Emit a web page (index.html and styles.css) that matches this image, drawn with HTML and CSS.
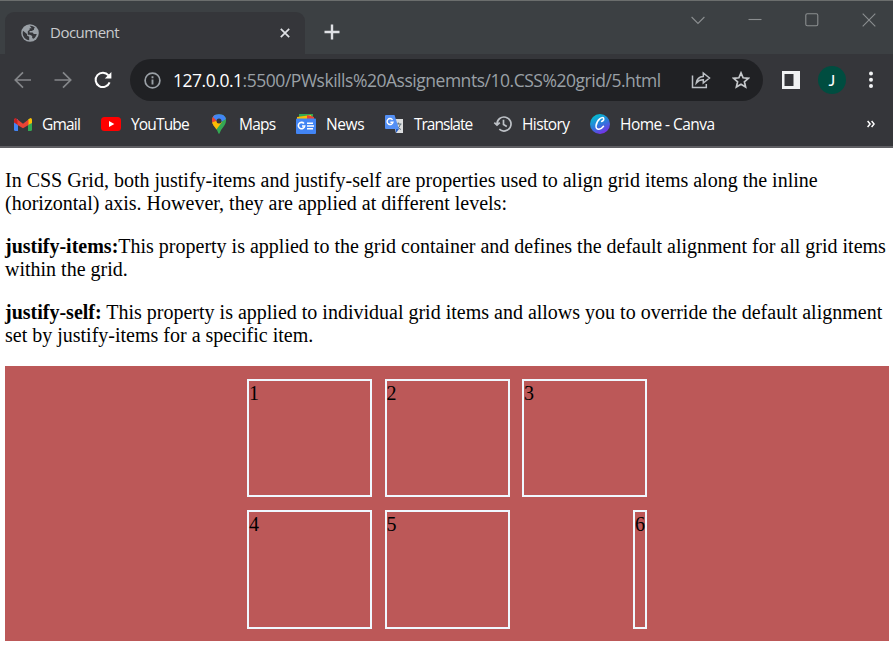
FILE: index.html
```
<!DOCTYPE html>
<html lang="en">
<head>
<meta charset="utf-8">
<title>Document</title>
<link rel="stylesheet" href="styles.css">
</head>
<body>
<header class="browser">
  <div class="tabs">
    <div class="tab">
      <svg class="globe" viewBox="0 0 18 18"><circle cx="9" cy="9" r="8.8" fill="#9aa0a6"/><path d="M2 6.7L6 10v1.5l2.2 1.2v3.5C4.500 15.900 1.700 12.800 1.700 9zM8.700 1.800c2.100-.2 4 .5 5.300 2l-1 .8v1.200l-2.300 1.300H8.600v1.300l3 .1 1.200 1.500h2.900c-.4 2-1.600 3.800-3.300 4.800l-1.200-.8v-2L8.900 10.700H6.800V7.300l1.800-1.500V4.300h2.100z" fill="#35363a"/></svg>
      <span class="tab-title">Document</span>
      <svg class="close" viewBox="0 0 10 10"><path d="M.8.8l8.400 8.400M9.200.8L.8 9.200" stroke="#dfe1e5" stroke-width="1.700"/></svg>
    </div>
    <svg class="plus" viewBox="0 0 16 16"><path d="M8 .5v15M.5 8h15" stroke="#dfe1e5" stroke-width="2.400"/></svg>
    <div class="window-buttons">
      <svg viewBox="0 0 14 14"><path d="M.6 4l6.400 6.500L13.400 4" /></svg>
      <svg viewBox="0 0 14 14"><path d="M.5 6.500h13"/></svg>
      <svg viewBox="0 0 14 14"><rect x=".8" y=".8" width="12" height="12" rx="1.500"/></svg>
      <svg viewBox="0 0 14 14"><path d="M.7.700l12.600 12.600M13.300.7L.7 13.300"/></svg>
    </div>
  </div>
  <div class="toolbar">
    <svg class="nav" viewBox="0 0 18 18"><path d="M17 9H1.500M9 1.300L1.300 9 9 16.700" fill="none" stroke="#85878a" stroke-width="1.700"/></svg>
    <svg class="nav forward" viewBox="0 0 18 18"><path d="M.5 9h16M9 1.300L16.700 9 9 16.700" fill="none" stroke="#85878a" stroke-width="1.700"/></svg>
    <svg class="nav reload" viewBox="0 0 18 18"><path d="M15.600 11.300A7.200 7.200 0 1 1 14.500 4.400" fill="none" stroke="#fff" stroke-width="2"/><path d="M17.400 1v6.600h-6.600z" fill="#fff"/></svg>
    <div class="address">
      <svg class="info" viewBox="0 0 17 17"><circle cx="8.500" cy="8.500" r="7.400" fill="none" stroke="#9aa0a6" stroke-width="1.700"/><path d="M8.500 7.500v5M8.500 4.300v1.900" stroke="#9aa0a6" stroke-width="1.900"/></svg>
      <span class="url"><span class="host">127.0.0.1</span>:5500/PWskills%20Assignemnts/10.CSS%20grid/5.html</span>
      <svg class="share" viewBox="0 0 20 18"><path d="M1.500 4.500V16.500H15.300V13M5.300 12c.5-4.300 3-6.400 7-6.600V2l6.200 5-6.200 5V8.800C9 8.700 7.100 9.700 5.300 12z" fill="none" stroke="#bdc1c6" stroke-width="1.500"/></svg>
      <svg class="star" viewBox="0 0 18 18"><path d="M9 1.900l2.100 4.900 5.300.5-4 3.500 1.200 5.200L9 13.200 4.400 16l1.200-5.200-4-3.500 5.300-.5z" fill="none" stroke="#c6c9cc" stroke-width="1.700"/></svg>
    </div>
    <svg class="panel" viewBox="0 0 18 18"><path d="M0 0h18v18H0zM2.500 3v12h9V3z" fill="#f1f3f4" fill-rule="evenodd"/></svg>
    <span class="avatar">J</span>
    <svg class="menu" viewBox="0 0 4 18"><circle cx="2" cy="2.500" r="2"/><circle cx="2" cy="8.700" r="2"/><circle cx="2" cy="14.900" r="2"/></svg>
  </div>
  <nav class="bookmarks">
    <a><svg viewBox="0 0 20 20"><path d="M1 5h4v12H2.500Q1 17 1 15.500z" fill="#4285f4"/><path d="M15 5h4v10.500Q19 17 17.500 17H15z" fill="#34a853"/><path d="M15 6q3.500-4 4 0v3l-4 2z" fill="#fbbc04"/><path d="M1 6q.5-4 4 0v5L1 8.500z" fill="#c5221f"/><path d="M4.500 5.500L10 9.700l5.500-4.200V11L10 14.200 4.500 11z" fill="#ea4335"/></svg><span class="gmail">Gmail</span></a>
    <a><svg viewBox="0 0 20 20"><rect y="3" width="20" height="14" rx="3.500" fill="#f00"/><path d="M8 7l5.300 3L8 13z" fill="#fff"/></svg><span class="youtube">YouTube</span></a>
    <a><svg viewBox="0 0 20 20"><g clip-path="url(#pin)"><path d="M0 0h20v20H0z" fill="#34a853"/><path d="M0 0h7l3 7-5 6H0z" fill="#ea4335"/><path d="M5 0h14v4l-9 5-6-6z" fill="#4285f4"/><path d="M2 9l5-2 6 1-6 8z" fill="#fbbc04"/></g><circle cx="10" cy="7" r="2.500" fill="#35363a"/><defs><clipPath id="pin"><path d="M10 .2c9 0 8 9 4.500 12.500Q11.500 16 10.500 19.500q-.5.700-1 0Q8.500 16 5.500 12.700C2 9 1 .2 10 .2z"/></clipPath></defs></svg><span>Maps</span></a>
    <a><svg viewBox="0 0 20 20"><path d="M3 0h14v6H3z" fill="#34a853"/><path d="M1 3l14-2 1 6H1z" fill="#fbbc04"/><path d="M11 1l7 2v4h-7z" fill="#ea4335"/><rect y="4.500" width="20" height="15.500" rx="1" fill="#4285f4"/><path d="M8 9.500A3.200 3.200 0 1 0 8.700 12H6M11 9.300h6M11 12h7M11 14.700h6" fill="none" stroke="#fff" stroke-width="1.600"/></svg><span class="news">News</span></a>
    <a><svg viewBox="0 0 20 20"><path d="M8 5h11v14H12z" fill="#dcdedf"/><path d="M11 10h6.500M14.300 8.500V10M16.500 10q-1 4-4 5M12.500 11.500q1.500 3 4.500 4" fill="none" stroke="#60717a" stroke-width="1"/><path d="M1.500 1h9l4.500 14H2Q1 15 1 14V1.500z" fill="#5490f5"/><path d="M11.500 15H15l-3 4z" fill="#2860c8"/><path d="M8.500 5.800A3 3 0 1 0 9 8.200H6.400" fill="none" stroke="#fff" stroke-width="1.400"/></svg><span class="translate">Translate</span></a>
    <a><svg viewBox="0 0 20 20"><path d="M4 10a7 7 0 1 1 2.300 5.200M1.300 8.700L4 11.200l2.800-2.500M10.500 5.800V10.500l3.300 2" fill="none" stroke="#bdc1c6" stroke-width="1.700"/></svg><span class="history">History</span></a>
    <a><svg viewBox="0 0 20 20"><defs><linearGradient id="canva" x1=".2" y1="0" x2=".7" y2="1"><stop stop-color="#00c4cc"/><stop offset=".5" stop-color="#277fda"/><stop offset="1" stop-color="#7d2ae8"/></linearGradient></defs><circle cx="10" cy="10" r="10" fill="url(#canva)"/><path d="M11.600 7.500q2.800-1.200 2-3.300-.8-1.400-3.600.5Q6.500 7.500 6 12q0 3.500 3 3.300 2.500-.3 4.500-3" fill="none" stroke="#fff" stroke-width="1.500" stroke-linecap="round"/></svg><span class="canva">Home - Canva</span></a>
    <svg class="more" viewBox="0 0 8 8"><path d="M.6 1l2.500 3L.6 7M4.600 1l2.500 3-2.500 3" fill="none" stroke="#fff" stroke-width="1.500"/></svg>
  </nav>
</header>
<main>
  <p>In CSS Grid, both justify-items and justify-self are properties used to align grid items along the inline (horizontal) axis. However, they are applied at different levels:</p>
  <p><b>justify-items:</b>This property is applied to the grid container and defines the default alignment for all grid items within the grid.</p>
  <p><b>justify-self:</b> This property is applied to individual grid items and allows you to override the default alignment set by justify-items for a specific item.</p>
  <div class="grid">
    <div class="item">1</div>
    <div class="item">2</div>
    <div class="item">3</div>
    <div class="item">4</div>
    <div class="item">5</div>
    <div class="item item-end">6</div>
  </div>
</main>
</body>
</html>
```
FILE: styles.css
```
* { box-sizing: border-box; }
body { margin: 0; background: #fff; color: #000; font: 20px/23px "Liberation Serif", serif; overflow: hidden; }
svg { display: block; flex: none; }
.browser { height: 148px; background: #35363a; border-bottom: 2px solid #5f5f63; font-family: "Open Sans", sans-serif; color: #fff; }
.tabs { height: 54px; background: #3c4043; border-top: 1px solid #6b6e6d; display: flex; padding: 11px 0 0 5px; }
.tab { width: 300px; height: 42px; background: #35363a; border-radius: 9px 9px 0 0; display: flex; align-items: center; padding: 0 15px 0 16px; }
.globe { width: 18px; height: 18px; }
.tab-title { margin-left: 11px; padding-bottom: 2px; flex: 1; font-size: 15px; letter-spacing: -.5px; color: #c9cbcd; }
.close { width: 10px; height: 10px; }
.plus { width: 16px; height: 16px; margin: 12px 0 0 19px; }
.window-buttons { margin: 1px 17px 0 auto; display: flex; gap: 43px; height: 14px; }
.window-buttons svg { width: 14px; height: 14px; fill: none; stroke: #8b8e90; stroke-width: 1.1; }
.toolbar { display: flex; align-items: center; height: 52px; padding: 0 20px 0 14px; }
.nav { width: 18px; height: 18px; }
.forward { margin-left: 22px; }
.reload { margin-left: 22px; }
.address { display: flex; align-items: center; width: 633px; height: 42px; margin: 0 19px 0 18px; border-radius: 21px; background: #202124; padding: 0 13px 0 14px; }
.info { width: 17px; height: 17px; }
.url { width: 505px; margin-left: 12px; white-space: nowrap; font-size: 17.5px; letter-spacing: -.47px; color: #9aa0a6; }
.host { color: #fff; }
.share { width: 20px; height: 18px; margin-left: 13px; }
.star { width: 18px; height: 18px; margin-left: auto; }
.panel { width: 18px; height: 18px; }
.avatar { width: 28px; height: 28px; margin-left: 18px; border-radius: 50%; background: #004d40; font: 16px/28px Lato, sans-serif; text-align: center; }
.menu { width: 4px; height: 18px; margin-left: auto; fill: #f1f3f4; }
.bookmarks { display: grid; grid-template-columns: 88px 108px 87px 88px 109px 97px 1fr 8px; align-items: center; height: 36px; padding: 0 18px 0 13px; }
.bookmarks a { display: flex; align-items: center; gap: 10px; font-size: 15.5px; white-space: nowrap; }
.bookmarks a svg { width: 20px; height: 20px; }
.bookmarks span { letter-spacing: -.75px; }
.bookmarks .gmail { letter-spacing: -.8px; margin-left: -1px; }
.bookmarks .youtube { letter-spacing: -.85px; }
.bookmarks .news { letter-spacing: -.4px; }
.bookmarks .translate { letter-spacing: -1px; }
.bookmarks .history { letter-spacing: -.6px; margin-left: -1px; }
.bookmarks .canva { letter-spacing: -.55px; }
.more { width: 8px; height: 8px; }
main { padding: 0 4px 0 5px; }
p { margin: 19px 0; padding-top: 1px; }
p:first-child { margin-top: 20px; }
p:first-child { margin-top: 19.5px; }
.grid { display: grid; grid-template-columns: repeat(3, 125px); grid-template-rows: repeat(2, 118.75px); gap: 12.5px; padding: 12.5px; justify-content: center; background: #bc5858; margin-top: 18.5px; }
p:first-child { margin-top: 20px; }
p:last-of-type { margin-bottom: 19px; }
.item { border: 2px solid aliceblue; padding-top: 1px; }
.item-end { justify-self: end; }
```
